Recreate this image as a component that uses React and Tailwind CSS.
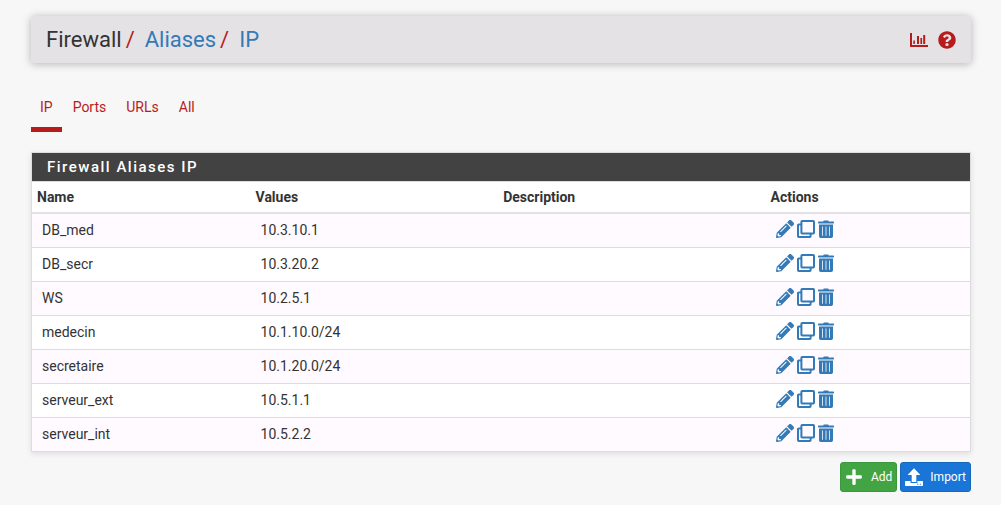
import { FaQuestionCircle, FaPlus, FaPencilAlt } from 'react-icons/fa';

const tabs = ['IP', 'Ports', 'URLs', 'All'];

const aliases = [
  { name: 'DB_med', values: '10.3.10.1' },
  { name: 'DB_secr', values: '10.3.20.2' },
  { name: 'WS', values: '10.2.5.1' },
  { name: 'medecin', values: '10.1.10.0/24' },
  { name: 'secretaire', values: '10.1.20.0/24' },
  { name: 'serveur_ext', values: '10.5.1.1' },
  { name: 'serveur_int', values: '10.5.2.2' },
];

function ChartIcon() {
  return (
    <svg viewBox="0 0 18 14" className="h-[14px] w-[18px]" fill="currentColor" aria-hidden="true">
      <path d="M0 0h2v12h16v2H0z" />
      <path d="M3.3 7.5h1.6V11H3.3zM7 3h2v8H7zM10.4 5h1.7v6h-1.7zM13.2 2h2v9h-2z" />
    </svg>
  );
}

function CloneIcon() {
  return (
    <svg viewBox="0 0 18 18" className="size-[18px]" fill="none" stroke="currentColor" strokeWidth="2" strokeLinejoin="round" aria-hidden="true">
      <rect x="4.4" y="1" width="12.6" height="12.6" rx="0.8" />
      <path d="M4 4.4H1.8a.8.8 0 0 0-.8.8V16.2a.8.8 0 0 0 .8.8H12.8a.8.8 0 0 0 .8-.8V14" />
    </svg>
  );
}

function TrashIcon() {
  return (
    <svg viewBox="0 0 16 18" className="h-[18px] w-4" fill="currentColor" aria-hidden="true">
      <path d="M5.2 1.4 5.800.6h4.4l.6.8H15.4c.3 0 .6.2.6.5V2.900c0 .3-.3.5-.6.5H.6C.3 3.400 0 3.200 0 2.900V1.900c0-.3.3-.5.6-.5z" />
      <path
        fillRule="evenodd"
        d="M1 4.600H15V16.300A1.700 1.700 0 0 1 13.300 18H2.700A1.700 1.700 0 0 1 1 16.300zM4.200 6.600V15.800H5V6.600zM7.600 6.600V15.800H8.400V6.600zM11 6.600V15.800H11.800V6.600z"
      />
    </svg>
  );
}

function UploadIcon() {
  return (
    <svg viewBox="0 0 18 18" className="size-[18px]" fill="currentColor" aria-hidden="true">
      <path d="M9 .2 15.400 7H11.300V14H6.700V7H2.600z" />
      <path
        fillRule="evenodd"
        d="M.8 13H5.600V15H12.400V13H17.200a.8.800 0 0 1 .8.800V17.200a.8.800 0 0 1-.8.800H.8A.8.800 0 0 1 0 17.200V13.800A.8.800 0 0 1 .8 13zM12.200 15.800V16.800H13.300V15.800zM14.800 15.800V16.800H15.900V15.800z"
      />
    </svg>
  );
}

export default function App() {
  return (
    <div className="min-h-screen bg-[#f7f7f7] px-[30px] pt-4 pb-3 pl-[31px] font-['Roboto',sans-serif] text-sm text-[#333]">
      <header className="flex h-[47px] items-center justify-between rounded-[3px] bg-[#e5e2e5] px-[15px] shadow-[0_1px_8px_rgba(0,0,0,0.28)]">
        <nav aria-label="Breadcrumb">
          <ol className="flex text-[22px] leading-6">
            <li>Firewall</li>
            <li className="flex">
              <span className="pr-[10px] pl-1 text-[#b71c1c]">/</span>
              <a href="#aliases" className="text-[#337ab7]">Aliases</a>
            </li>
            <li className="flex">
              <span className="pr-[10px] pl-1 text-[#b71c1c]">/</span>
              <a href="#ip" className="text-[#337ab7]">IP</a>
            </li>
          </ol>
        </nav>
        <div className="flex items-center gap-[10px] text-[#b71c1c]">
          <a href="#status" aria-label="Status"><ChartIcon /></a>
          <a href="#help" aria-label="Help"><FaQuestionCircle className="size-[18px]" /></a>
        </div>
      </header>

      <nav aria-label="Alias types" className="mt-6 flex gap-[2px]">
        {tabs.map((tab, i) => (
          <a
            key={tab}
            href={'#' + tab}
            className={
              'border-b-[5px] px-[9px] pt-[10px] pb-[10px] leading-5 text-[#b71c1c] ' +
              (i === 0 ? 'border-[#b71c1c]' : 'border-transparent')
            }
          >
            {tab}
          </a>
        ))}
      </nav>

      <section className="mt-5 border border-[#dddde0] bg-white shadow-[0_2px_6px_rgba(0,0,0,0.1)]">
        <h2 className="bg-[#424242] px-[15px] text-[15px] leading-7 font-medium tracking-widest text-white">
          Firewall Aliases IP
        </h2>
        <table className="w-full table-fixed border-separate border-spacing-0 border-t border-[#dddde0] text-left">
          <thead>
            <tr className="leading-5 *:border-b-2 *:border-[#e4e1e4] *:px-[5px] *:py-[5px] *:font-bold">
              <th scope="col" className="w-[23.3%]">Name</th>
              <th scope="col" className="w-[26.4%]">Values</th>
              <th scope="col" className="w-[28.5%]">Description</th>
              <th scope="col">Actions</th>
            </tr>
          </thead>
          <tbody>
            {aliases.map((alias) => (
              <tr
                key={alias.name}
                className="h-[34px] odd:bg-[#fffaff] last:h-[33px] *:border-b *:border-[#dddde0] *:px-[10px] *:pt-0 *:pb-[2px] last:*:border-b-0"
              >
                <td>{alias.name}</td>
                <td>{alias.values}</td>
                <td></td>
                <td>
                  <div className="flex items-center gap-[3px] pb-[2px] text-[#337ab7]">
                    <a href="#edit" aria-label={'Edit ' + alias.name}><FaPencilAlt className="size-[18px]" /></a>
                    <a href="#copy" aria-label={'Copy ' + alias.name}><CloneIcon /></a>
                    <a href="#delete" aria-label={'Delete ' + alias.name}><TrashIcon /></a>
                  </div>
                </td>
              </tr>
            ))}
          </tbody>
        </table>
      </section>

      <div className="mt-[10px] flex justify-end gap-[3px] text-xs text-white">
        <button type="button" className="flex h-[30px] items-center gap-2 rounded-[3px] border border-[#3d9640] bg-[#43a443] px-1">
          <FaPlus className="size-[18px]" />
          Add
        </button>
        <button type="button" className="flex h-[30px] items-center gap-[7px] rounded-[3px] border border-[#1669b8] bg-[#1976d8] px-1">
          <UploadIcon />
          Import
        </button>
      </div>
    </div>
  );
}
